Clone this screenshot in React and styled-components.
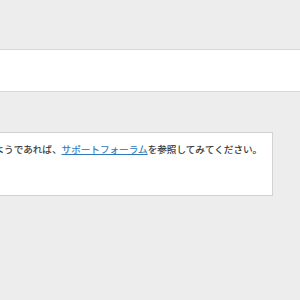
import React from "react";
import styled, { createGlobalStyle } from "styled-components";

const Global = createGlobalStyle`
  html, body {
    margin: 0;
    padding: 0;
    background: #ededed;
    overflow: hidden;
  }
  body {
    width: 300px;
    height: 300px;
    font-family: "Noto Sans CJK JP", "Noto Sans", sans-serif;
  }
`;

const Page = styled.div`
  padding-top: 49px;
`;

const Band = styled.div`
  height: 41px;
  background: #ffffff;
  border-top: 1px solid #d8d8d8;
  border-bottom: 1px solid #d8d8d8;
`;

const Notice = styled.div`
  margin: 40px 0 0 -30px;
  width: 301px;
  height: 62px;
  background: #ffffff;
  border: 1px solid #d2d2d2;
`;

const Message = styled.p`
  margin: 0;
  padding: 9px 0 0 23.5px;
  font-size: 9.6px;
  line-height: 15px;
  color: #2e2e2e;
  white-space: nowrap;
  -webkit-text-stroke: 0.15px #2e2e2e;
`;

const ForumLink = styled.a`
  color: #2f78b9;
  text-decoration: underline;
  -webkit-text-stroke: 0.15px #2f78b9;
`;

export default function App() {
  return (
    <Page>
      <Global />
      <Band />
      <Notice>
        <Message>
          ようであれば、<ForumLink href="#">サポートフォーラム</ForumLink>を参照してみてください。
        </Message>
      </Notice>
    </Page>
  );
}
